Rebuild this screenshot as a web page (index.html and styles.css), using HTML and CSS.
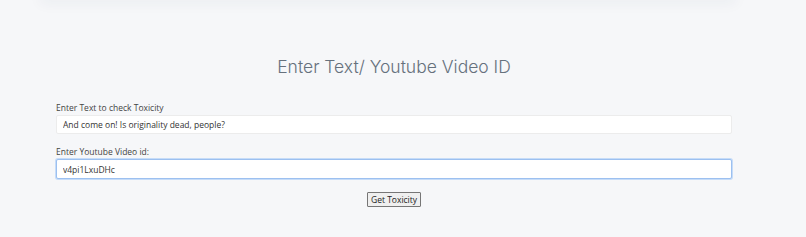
FILE: index.html
```html
<!DOCTYPE html>
<html>

<head lang="en">
    <meta charset="UTF-8">
    <title>Toxicity</title>
    <link rel="stylesheet" href="styles.css">
</head>

<body>
    <div class="top-shadow"></div>
    <div class="main">
        <h2 class="main-title">Enter Text/ Youtube Video ID</h2>
        <div class="field">
            <label for="text">Enter Text to check Toxicity</label>
            <input type="text" id="text" class="field-input" value="And come on! Is originality dead, people?">
        </div>
        <div class="field last">
            <label for="vid">Enter Youtube Video id:</label>
            <input type="text" id="vid" class="field-input focus" value="v4pi1LxuDHc">
        </div>
        <div class="btn-row">
            <button class="btn">Get Toxicity</button>
        </div>
    </div>
</body>

</html>
```

FILE: styles.css
```css
html,
body {
    margin: 0;
    padding: 0;
    background: #f6f7f9;
    font-family: "Open Sans", "Liberation Sans", sans-serif;
}

.top-shadow {
    height: 10px;
    margin: -10px 70px 0 40px;
    background: #f6f7f9;
    box-shadow: 0 3px 14px rgba(40, 50, 90, 0.06);
}

.main {
    width: 676px;
    margin-left: 56px;
    padding-top: 53px;
}

.main-title {
    margin: 0 0 21px 0;
    text-align: center;
    font-family: "Inter", "Lato", sans-serif;
    font-weight: 300;
    font-size: 17.5px;
    line-height: 28px;
    color: #66717d;
}

.field {
    margin-bottom: 12px;
}

.field.last {
    margin-bottom: 6px;
}

.field label {
    display: block;
    font-size: 8.5px;
    line-height: 12px;
    color: #444;
    margin-bottom: 1px;
}

.field-input {
    display: block;
    box-sizing: border-box;
    width: 100%;
    height: 19px;
    padding: 0 6px;
    border: 1px solid #ececec;
    border-radius: 2px;
    background: #fff;
    font-family: "Open Sans", "Liberation Sans", sans-serif;
    font-size: 8.5px;
    color: #333;
    outline: none;
}

.field-input.focus {
    height: 20px;
    border: 1px solid #9cc0f0;
    box-shadow: 0 0 0 1px #c6dcf8;
}

.btn-row {
    text-align: center;
    padding-top: 1px;
}

.btn {
    font-family: "Open Sans", "Liberation Sans", sans-serif;
    font-size: 8.5px;
    color: #222;
    background: #efefef;
    border: 1px solid #767676;
    border-radius: 1px;
    padding: 1px 3px;
    height: 15px;
}
```
